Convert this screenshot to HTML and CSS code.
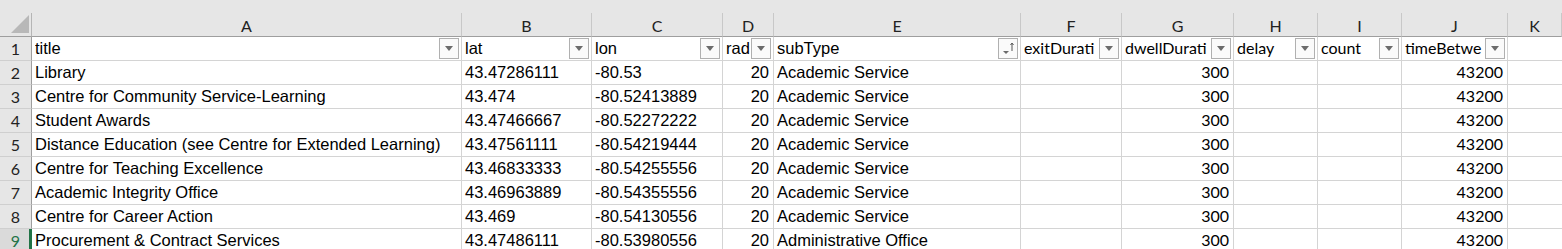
FILE: index.html
```html
<!DOCTYPE html>
<html lang="en">
<head>
    <meta charset="UTF-8">
    <title>Locations</title>
    <link rel="stylesheet" href="styles.css">
</head>
<body>
    <div class="topbar"></div>
    <div class="grid">
        <div class="corner">
            <svg width="18" height="18" viewBox="0 0 18 18"><polygon points="18,0 18,18 0,18" fill="#b8b8b8"/></svg>
        </div>
        <div class="colhead">A</div>
        <div class="colhead">B</div>
        <div class="colhead">C</div>
        <div class="colhead">D</div>
        <div class="colhead">E</div>
        <div class="colhead">F</div>
        <div class="colhead">G</div>
        <div class="colhead">H</div>
        <div class="colhead">I</div>
        <div class="colhead">J</div>
        <div class="colhead">K</div>

        <!-- row 1: table headers with filter buttons -->
        <div class="rowhead">1</div>
        <div class="cell hdr"><span class="txt">title</span><span class="filter"><i></i></span></div>
        <div class="cell hdr"><span class="txt">lat</span><span class="filter"><i></i></span></div>
        <div class="cell hdr"><span class="txt">lon</span><span class="filter"><i></i></span></div>
        <div class="cell hdr"><span class="txt">rad</span><span class="filter"><i></i></span></div>
        <div class="cell hdr"><span class="txt">subType</span><span class="filter sorted"><svg width="18" height="18" viewBox="0 0 18 18"><polygon points="4,11 10,11 7,14" fill="#6b6b6b"/><path d="M13 3.5 V11 M11.5 5 L13 3 L14.5 5" stroke="#555" stroke-width="1" fill="none"/></svg></span></div>
        <div class="cell hdr cal"><span class="txt">exitDurati</span><span class="filter"><i></i></span></div>
        <div class="cell hdr cal"><span class="txt">dwellDurati</span><span class="filter"><i></i></span></div>
        <div class="cell hdr cal"><span class="txt">delay</span><span class="filter"><i></i></span></div>
        <div class="cell hdr cal"><span class="txt">count</span><span class="filter"><i></i></span></div>
        <div class="cell hdr cal"><span class="txt">timeBetwe</span><span class="filter"><i></i></span></div>
        <div class="cell"></div>

        <div class="rowhead">2</div>
        <div class="cell">Library</div>
        <div class="cell">43.47286111</div>
        <div class="cell">-80.53</div>
        <div class="cell num">20</div>
        <div class="cell">Academic Service</div>
        <div class="cell"></div>
        <div class="cell num cal">300</div>
        <div class="cell"></div>
        <div class="cell"></div>
        <div class="cell num cal">43200</div>
        <div class="cell"></div>

        <div class="rowhead">3</div>
        <div class="cell">Centre for Community Service-Learning</div>
        <div class="cell">43.474</div>
        <div class="cell">-80.52413889</div>
        <div class="cell num">20</div>
        <div class="cell">Academic Service</div>
        <div class="cell"></div>
        <div class="cell num cal">300</div>
        <div class="cell"></div>
        <div class="cell"></div>
        <div class="cell num cal">43200</div>
        <div class="cell"></div>

        <div class="rowhead">4</div>
        <div class="cell">Student Awards</div>
        <div class="cell">43.47466667</div>
        <div class="cell">-80.52272222</div>
        <div class="cell num">20</div>
        <div class="cell">Academic Service</div>
        <div class="cell"></div>
        <div class="cell num cal">300</div>
        <div class="cell"></div>
        <div class="cell"></div>
        <div class="cell num cal">43200</div>
        <div class="cell"></div>

        <div class="rowhead">5</div>
        <div class="cell">Distance Education (see Centre for Extended Learning)</div>
        <div class="cell">43.47561111</div>
        <div class="cell">-80.54219444</div>
        <div class="cell num">20</div>
        <div class="cell">Academic Service</div>
        <div class="cell"></div>
        <div class="cell num cal">300</div>
        <div class="cell"></div>
        <div class="cell"></div>
        <div class="cell num cal">43200</div>
        <div class="cell"></div>

        <div class="rowhead">6</div>
        <div class="cell">Centre for Teaching Excellence</div>
        <div class="cell">43.46833333</div>
        <div class="cell">-80.54255556</div>
        <div class="cell num">20</div>
        <div class="cell">Academic Service</div>
        <div class="cell"></div>
        <div class="cell num cal">300</div>
        <div class="cell"></div>
        <div class="cell"></div>
        <div class="cell num cal">43200</div>
        <div class="cell"></div>

        <div class="rowhead">7</div>
        <div class="cell">Academic Integrity Office</div>
        <div class="cell">43.46963889</div>
        <div class="cell">-80.54355556</div>
        <div class="cell num">20</div>
        <div class="cell">Academic Service</div>
        <div class="cell"></div>
        <div class="cell num cal">300</div>
        <div class="cell"></div>
        <div class="cell"></div>
        <div class="cell num cal">43200</div>
        <div class="cell"></div>

        <div class="rowhead">8</div>
        <div class="cell">Centre for Career Action</div>
        <div class="cell">43.469</div>
        <div class="cell">-80.54130556</div>
        <div class="cell num">20</div>
        <div class="cell">Academic Service</div>
        <div class="cell"></div>
        <div class="cell num cal">300</div>
        <div class="cell"></div>
        <div class="cell"></div>
        <div class="cell num cal">43200</div>
        <div class="cell"></div>

        <div class="rowhead active">9</div>
        <div class="cell">Procurement &amp; Contract Services</div>
        <div class="cell">43.47486111</div>
        <div class="cell">-80.53980556</div>
        <div class="cell num">20</div>
        <div class="cell">Administrative Office</div>
        <div class="cell"></div>
        <div class="cell num cal">300</div>
        <div class="cell"></div>
        <div class="cell"></div>
        <div class="cell num cal">43200</div>
        <div class="cell"></div>
    </div>
</body>
</html>
```
FILE: styles.css
```css
html, body {
    margin: 0;
    height: 249px;
    overflow: hidden;
    background-color: #fff;
}
body {
    font-family: "Liberation Sans", Arial, sans-serif;
    font-size: 16.5px;
    color: #000;
}
.topbar {
    height: 13px;
    background-color: #e6e6e6;
}
.grid {
    display: grid;
    grid-template-columns: 32px 430px 130px 131px 51px 247px 101px 112px 84px 84px 106px 1fr;
    grid-auto-rows: 24px;
}
.corner {
    background-color: #e6e6e6;
    border-right: 1px solid #b5b5b5;
    border-bottom: 1px solid #9e9e9e;
    box-sizing: border-box;
    display: flex;
    align-items: flex-end;
    justify-content: flex-end;
    padding: 0 2px 3px 0;
}
.colhead {
    background-color: #e6e6e6;
    border-right: 1px solid #c8c8c8;
    border-bottom: 1px solid #9e9e9e;
    box-sizing: border-box;
    font-family: Lato, "Liberation Sans", sans-serif;
    font-size: 16px;
    color: #222;
    display: flex;
    align-items: center;
    justify-content: center;
    padding-top: 1px;
}
.colhead:last-child {
    border-right: none;
}
.rowhead {
    background-color: #e6e6e6;
    border-right: 1px solid #9e9e9e;
    border-bottom: 1px solid #cfcfcf;
    box-sizing: border-box;
    font-family: Lato, "Liberation Sans", sans-serif;
    font-size: 16px;
    color: #222;
    display: flex;
    align-items: center;
    justify-content: center;
}
.rowhead.active {
    background-color: #dadada;
    color: #217346;
    border-right: 3px solid #217346;
    padding-left: 2px;
}
.cell {
    border-right: 1px solid #d4d4d4;
    border-bottom: 1px solid #d4d4d4;
    box-sizing: border-box;
    padding: 0 3px;
    white-space: nowrap;
    overflow: hidden;
    display: flex;
    align-items: center;
}
.cell:nth-child(12n) {
    border-right: none;
}
.num {
    justify-content: flex-end;
    padding-right: 4px;
}
.cal {
    font-family: Lato, "Liberation Sans", sans-serif;
    font-size: 16px;
    padding-bottom: 2px;
}
.hdr {
    padding-right: 2px;
}
.hdr .txt {
    flex: 1;
    min-width: 0;
    overflow: hidden;
}
.filter {
    flex: none;
    width: 20px;
    height: 21px;
    box-sizing: border-box;
    border: 1px solid #b0b0b0;
    background-color: #fafafa;
    display: flex;
    align-items: center;
    justify-content: center;
}
.hdr.cal .filter {
    margin-bottom: -2px;
}
.filter i {
    width: 0;
    height: 0;
    border-left: 4px solid transparent;
    border-right: 4px solid transparent;
    border-top: 5px solid #6b6b6b;
}
.filter svg {
    display: block;
}
```
